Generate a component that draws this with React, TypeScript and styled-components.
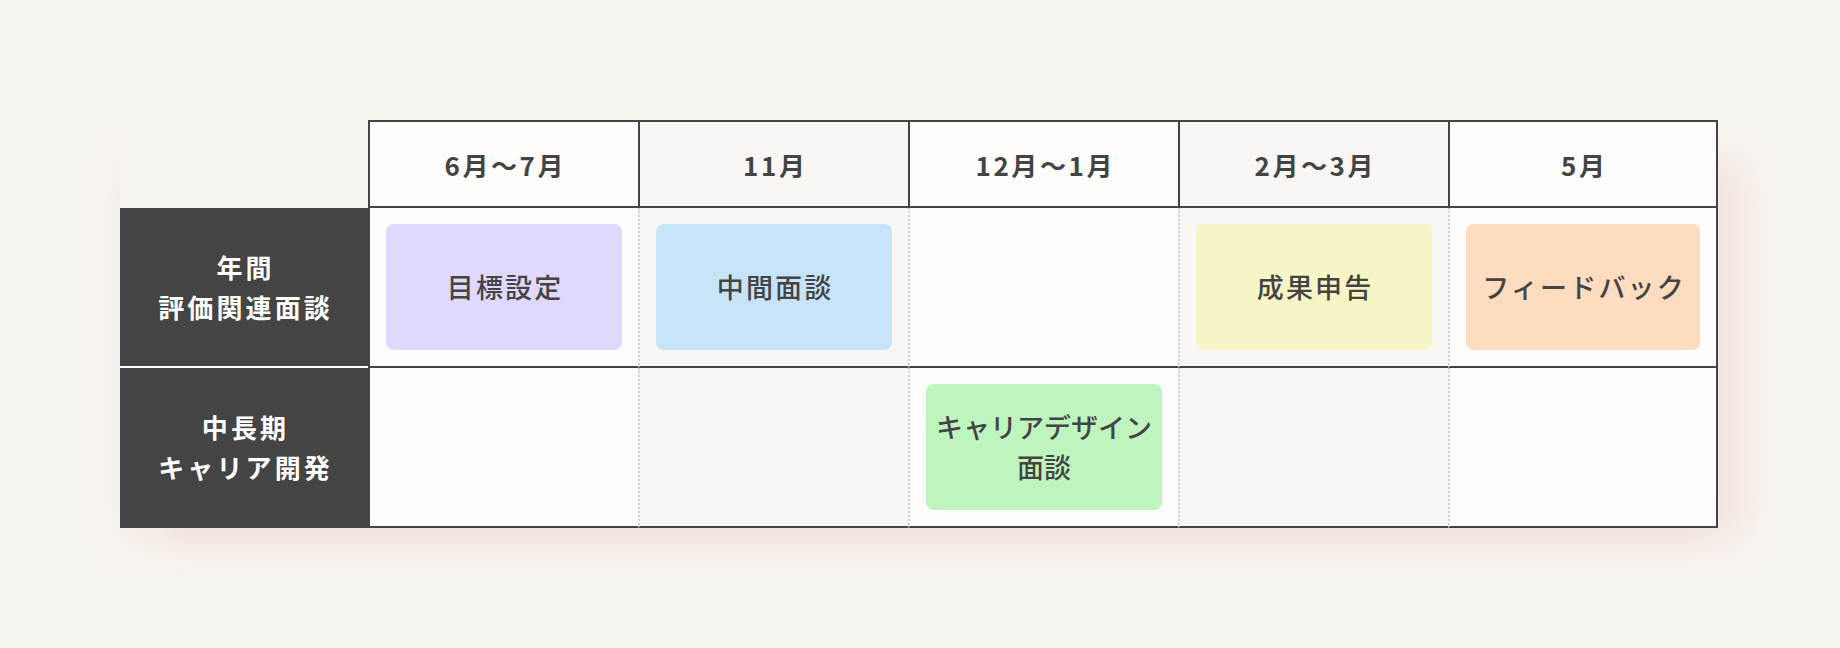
import React from 'react';
import styled, { createGlobalStyle } from 'styled-components';

type Slot = { text: string[]; color: string; tight?: boolean } | null;

interface RowData {
  label: string[];
  slots: Slot[];
}

const months = ['6月〜7月', '11月', '12月〜1月', '2月〜3月', '5月'];

const rows: RowData[] = [
  {
    label: ['年間', '評価関連面談'],
    slots: [
      { text: ['目標設定'], color: '#e0d8fd' },
      { text: ['中間面談'], color: '#c7e3f8' },
      null,
      { text: ['成果申告'], color: '#f6f5c6' },
      { text: ['フィードバック'], color: '#fedcc0' },
    ],
  },
  {
    label: ['中長期', 'キャリア開発'],
    slots: [null, null, { text: ['キャリアデザイン', '面談'], color: '#bef4bd', tight: true }, null, null],
  },
];

const App = () => {
  return (
    <>
      <GlobalStyle />
      <Page>
        <Schedule>
          <Corner />
          {months.map((m, i) => (
            <HeadCell key={m} tinted={i % 2 === 1} last={i === months.length - 1}>
              {m}
            </HeadCell>
          ))}
          {rows.map((row, r) => (
            <React.Fragment key={r}>
              <LabelCell divider={r < rows.length - 1}>
                {row.label.map(l => <span key={l}>{l}</span>)}
              </LabelCell>
              {row.slots.map((slot, i) => (
                <BodyCell key={i} tinted={i % 2 === 1} first={i === 0} last={i === row.slots.length - 1}>
                  {slot && (
                    <EventCard color={slot.color} tight={!!slot.tight}>
                      {slot.text.map(t => <span key={t}>{t}</span>)}
                    </EventCard>
                  )}
                </BodyCell>
              ))}
            </React.Fragment>
          ))}
        </Schedule>
      </Page>
    </>
  );
};

export default App;

const GlobalStyle = createGlobalStyle`
  html, body {
    margin: 0;
    padding: 0;
    background: #f8f4f0;
  }
  * {
    box-sizing: border-box;
  }
`;

const Page = styled.div`
  width: 1840px;
  height: 648px;
  padding: 120px 0 0 120px;
  background: #f8f4f0;
  font-family: 'Noto Sans CJK JP', 'Noto Sans', sans-serif;
  color: #444;
`;

const Schedule = styled.div`
  display: grid;
  grid-template-columns: 248px repeat(5, 270px);
  grid-template-rows: 88px 160px 160px;
  width: fit-content;
  box-shadow: 40px 26px 36px -16px rgba(225, 190, 180, 0.28), -10px 26px 36px -16px rgba(225, 190, 180, 0.2);
`;

const Corner = styled.div`
  background: #f8f4f0;
`;

interface CellProps {
  tinted: boolean;
  last?: boolean;
  first?: boolean;
}

const HeadCell = styled.div<CellProps>`
  display: flex;
  align-items: center;
  justify-content: center;
  background: ${p => (p.tinted ? '#faf6f3' : '#fefdfc')};
  border-top: 2px solid #444;
  border-bottom: 2px solid #444;
  border-left: 2px solid #444;
  border-right: ${p => (p.last ? '2px solid #444' : 'none')};
  font-size: 26px;
  font-weight: 700;
  letter-spacing: 0.1em;
  padding-left: 0.1em;
`;

const LabelCell = styled.div<{ divider: boolean }>`
  display: flex;
  flex-direction: column;
  align-items: center;
  justify-content: center;
  background: #444;
  color: #fff;
  border-bottom: 2px solid ${p => (p.divider ? '#fff' : '#444')};
  font-size: 26px;
  font-weight: 700;
  line-height: 40px;
  letter-spacing: 0.12em;
  padding-left: 0.12em;
`;

const BodyCell = styled.div<CellProps>`
  display: flex;
  padding: 16px;
  background: ${p => (p.tinted ? '#faf6f3' : '#fefdfc')};
  border-bottom: 2px solid #444;
  border-left: ${p => (p.first ? '2px solid #444' : '2px dotted #d0d0d0')};
  border-right: ${p => (p.last ? '2px solid #444' : 'none')};
`;

const EventCard = styled.div<{ color: string; tight: boolean }>`
  flex: 1;
  display: flex;
  flex-direction: column;
  align-items: center;
  justify-content: center;
  background: ${p => p.color};
  border-radius: 8px;
  font-size: 27px;
  font-weight: 500;
  line-height: 40px;
  letter-spacing: ${p => (p.tight ? '0' : '0.08em')};
  padding-left: ${p => (p.tight ? '0' : '0.08em')};
  white-space: nowrap;
`;
